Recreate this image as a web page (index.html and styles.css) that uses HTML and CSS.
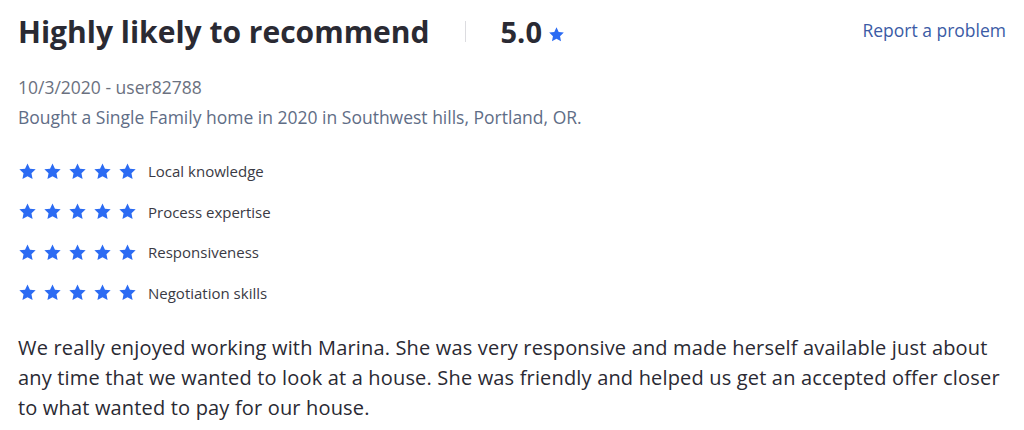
FILE: index.html
```html
<!DOCTYPE html>
<html lang="en">
<head>
    <meta charset="UTF-8">
    <meta name="viewport" content="width=device-width, initial-scale=1.0">
    <title>Review</title>
    <link rel="stylesheet" href="styles.css">
</head>
<body>
    <svg width="0" height="0" class="defs">
        <symbol id="star" viewBox="0 0 24 24">
            <path d="M12 1.8l3.1 6.6 7.2.9-5.3 5 1.4 7.1L12 17.9l-6.4 3.5 1.4-7.1-5.3-5 7.2-.9z"/>
        </symbol>
    </svg>
    <div class="review">
        <div class="review-header">
            <h1 class="title">Highly likely to recommend</h1>
            <span class="divider"></span>
            <span class="score">5.0</span>
            <svg class="star-small"><use href="#star"/></svg>
            <a class="report" href="#">Report a problem</a>
        </div>

        <div class="meta">10/3/2020 - user82788</div>
        <div class="sub">Bought a Single Family home in 2020 in Southwest hills, Portland, OR.</div>

        <div class="ratings">
            <div class="rating-row">
                <div class="stars">
                    <svg><use href="#star"/></svg><svg><use href="#star"/></svg><svg><use href="#star"/></svg><svg><use href="#star"/></svg><svg><use href="#star"/></svg>
                </div>
                <span>Local knowledge</span>
            </div>
            <div class="rating-row">
                <div class="stars">
                    <svg><use href="#star"/></svg><svg><use href="#star"/></svg><svg><use href="#star"/></svg><svg><use href="#star"/></svg><svg><use href="#star"/></svg>
                </div>
                <span>Process expertise</span>
            </div>
            <div class="rating-row">
                <div class="stars">
                    <svg><use href="#star"/></svg><svg><use href="#star"/></svg><svg><use href="#star"/></svg><svg><use href="#star"/></svg><svg><use href="#star"/></svg>
                </div>
                <span>Responsiveness</span>
            </div>
            <div class="rating-row">
                <div class="stars">
                    <svg><use href="#star"/></svg><svg><use href="#star"/></svg><svg><use href="#star"/></svg><svg><use href="#star"/></svg><svg><use href="#star"/></svg>
                </div>
                <span>Negotiation skills</span>
            </div>
        </div>

        <p class="body-text">We really enjoyed working with Marina. She was very responsive and made herself available just about any time that we wanted to look at a house. She was friendly and helped us get an accepted offer closer to what wanted to pay for our house.</p>
    </div>
</body>
</html>
```

FILE: styles.css
```css
body {
    font-family: "Open Sans", Arial, sans-serif;
    background-color: #fff;
    color: #2a2a33;
    margin: 0;
    padding: 0;
}
.defs {
    position: absolute;
}
.review {
    padding: 11px 18px 0 18px;
}
.review-header {
    display: flex;
    align-items: center;
    height: 40px;
}
.title {
    margin: 0;
    font-size: 30px;
    font-weight: 700;
    color: #2a2a33;
}
.divider {
    width: 1px;
    height: 21px;
    background-color: #dcdce0;
    margin: 0 35px 0 35px;
}
.score {
    font-size: 29px;
    font-weight: 700;
}
.star-small {
    width: 17px;
    height: 17px;
    fill: #2b6bf3;
    margin: 7px 0 0 6px;
}
.report {
    margin-left: auto;
    color: #3b5ba5;
    font-size: 17.5px;
    text-decoration: none;
    margin-bottom: 2px;
}
.meta {
    margin-top: 23px;
    font-size: 17.5px;
    color: #6b7180;
    line-height: 26px;
}
.sub {
    margin-top: 4px;
    font-size: 17.5px;
    color: #5f6d86;
    line-height: 26px;
}
.ratings {
    margin-top: 29px;
    display: flex;
    flex-direction: column;
    gap: 16.5px;
}
.rating-row {
    display: flex;
    align-items: center;
    height: 24px;
    font-size: 15px;
    color: #3a3a44;
}
.stars {
    display: flex;
    gap: 6px;
    margin-right: 11px;
}
.stars svg {
    width: 19px;
    height: 19px;
    fill: #2b6bf3;
}
.body-text {
    margin: 28px 0 0 0;
    font-size: 20px;
    letter-spacing: 0.17px;
    line-height: 30px;
    color: #2a2a33;
    max-width: 990px;
}
```
